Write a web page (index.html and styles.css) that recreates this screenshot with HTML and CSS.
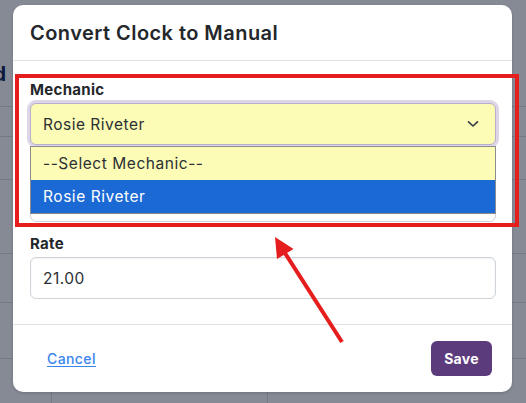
FILE: index.html
```html
<!DOCTYPE html>
<html lang="en">
<head>
<meta charset="utf-8">
<title>Convert Clock to Manual</title>
<link rel="stylesheet" href="styles.css">
</head>
<body>
<div class="page">
  <div class="bg-row bg-head"><div class="bg-title"><span>Clocked</span></div></div>
  <div class="bg-row r1"></div>
  <div class="bg-row r2"></div>
  <div class="bg-row r3"></div>
  <div class="bg-row r4"></div>
  <div class="bg-row r5"></div>
  <div class="bg-row r6"><span class="cell c1"></span><span class="cell c2"></span><span class="cell c3"></span></div>
</div>

<div class="modal">
  <div class="modal-header"><h1>Convert Clock to Manual</h1></div>
  <div class="modal-body">
    <div class="field">
      <label class="label">Mechanic</label>
      <div class="select-wrap">
        <div class="control select">
          <span>Rosie Riveter</span>
          <svg class="chev" width="12" height="8" viewBox="0 0 12 8"><path d="M1.5 1.8 L6 6 L10.5 1.8" fill="none" stroke="#343a40" stroke-width="1.6" stroke-linecap="round" stroke-linejoin="round"/></svg>
        </div>
        <div class="dropdown">
          <div class="option">--Select Mechanic--</div>
          <div class="option selected">Rosie Riveter</div>
        </div>
      </div>
    </div>
    <div class="field">
      <label class="label covered">Hours</label>
      <div class="control"></div>
    </div>
    <div class="field">
      <label class="label">Rate</label>
      <div class="control">21.00</div>
    </div>
  </div>
  <div class="modal-footer">
    <a class="cancel" href="#">Cancel</a>
    <button class="save" type="button">Save</button>
  </div>
</div>

<div class="highlight"></div>
<svg class="arrow" width="526" height="403" viewBox="0 0 526 403">
  <line x1="342" y1="342" x2="283" y2="250" stroke="#e61d1d" stroke-width="4"/>
  <polygon points="275,237 293.5,249 277,259" fill="#e61d1d"/>
</svg>
</body>
</html>
```

FILE: styles.css
```css
* { box-sizing: border-box; }

html, body {
  margin: 0;
  padding: 0;
}

body {
  width: 526px;
  height: 403px;
  overflow: hidden;
  position: relative;
  background: #858a95;
  font-family: Inter, "Noto Sans", sans-serif;
  color: #212529;
}

/* background page (dimmed) */
.page {
  display: flex;
  flex-direction: column;
}
.bg-row {
  border-bottom: 1px solid #757a85;
  display: flex;
}
.bg-head { height: 107px; align-items: flex-start; }
.bg-title {
  width: 6px;
  overflow: hidden;
  display: flex;
  justify-content: flex-end;
  margin-top: 62px;
  font-weight: 700;
  font-size: 20px;
  color: #0b1a3d;
  white-space: nowrap;
}
.r1 { height: 30px; }
.r2 { height: 43px; }
.r3 { height: 74px; }
.r4 { height: 49px; }
.r5 { height: 56px; }
.r6 { height: 60px; border-bottom: none; }
.cell { height: 100%; }
.c1 { width: 52px; border-right: 1px solid #757a85; }
.c2 { width: 216px; border-right: 1px solid #757a85; }
.c3 { flex: 1; }

/* modal */
.modal {
  position: absolute;
  left: 13px;
  top: 5px;
  width: 499px;
  height: 387px;
  background: #fff;
  border-radius: 10px;
  box-shadow: 0 1px 3px rgba(0,0,0,0.18);
  display: flex;
  flex-direction: column;
}
.modal-header {
  padding: 13px 17px 12px;
  border-bottom: 1px solid #dee2e6;
}
.modal-header h1 {
  margin: 0;
  font-size: 20px;
  line-height: 30px;
  font-weight: 600;
  color: #23272b;
  letter-spacing: 0.45px;
}
.modal-body {
  padding: 18px 16px 25px 17px;
  display: flex;
  flex-direction: column;
  gap: 11px;
}
.field { display: flex; flex-direction: column; }
.label {
  font-size: 15px;
  line-height: 22px;
  font-weight: 700;
  color: #23272b;
  margin-bottom: 2px;
  letter-spacing: 0.3px;
}
.label.covered { visibility: hidden; }
.control {
  height: 42px;
  border: 1px solid #ced4da;
  border-radius: 6px;
  padding: 0 12px;
  display: flex;
  align-items: center;
  font-size: 15.5px;
  letter-spacing: 0.5px;
  color: #2b2f33;
  box-shadow: inset 0 1px 2px rgba(0,0,0,0.06);
}
.select-wrap { position: relative; }
.select {
  background: #fcfcb6;
  border-color: #b9aecb;
  box-shadow: 0 0 0 3px #ddd5e8;
  justify-content: space-between;
  padding-right: 16px;
}
.chev { display: block; }
.dropdown {
  position: absolute;
  left: 0;
  right: 0;
  top: 43px;
  border: 1px solid #8c8c8c;
  background: #fff;
  z-index: 2;
}
.option {
  height: 33px;
  display: flex;
  align-items: center;
  padding: 0 12px;
  font-size: 15.5px;
  letter-spacing: 0.55px;
  background: #fcfcb6;
  color: #2b2f33;
}
.option.selected {
  background: #1a69d4;
  color: #fff;
}
.option.first-dash { letter-spacing: 0.8px; }

.modal-footer {
  border-top: 1px solid #dee2e6;
  flex: 1;
  display: flex;
  align-items: center;
  justify-content: space-between;
  padding: 0 20px 0 34px;
}
.cancel {
  font-size: 14px;
  font-weight: 500;
  letter-spacing: 0.4px;
  color: #3a86ee;
  text-decoration: underline;
  text-underline-offset: 2px;
}
.save {
  width: 61px;
  height: 35px;
  border: none;
  border-radius: 6px;
  background: #5c3b7c;
  color: #fff;
  font-family: Inter, sans-serif;
  font-weight: 700;
  font-size: 14px;
  letter-spacing: 0.3px;
  padding: 0;
}

/* annotations */
.highlight {
  position: absolute;
  left: 15px;
  top: 74px;
  width: 504px;
  height: 153px;
  border: 4px solid #e61d1d;
  z-index: 5;
}
.arrow {
  position: absolute;
  left: 0;
  top: 0;
  z-index: 6;
}
```
